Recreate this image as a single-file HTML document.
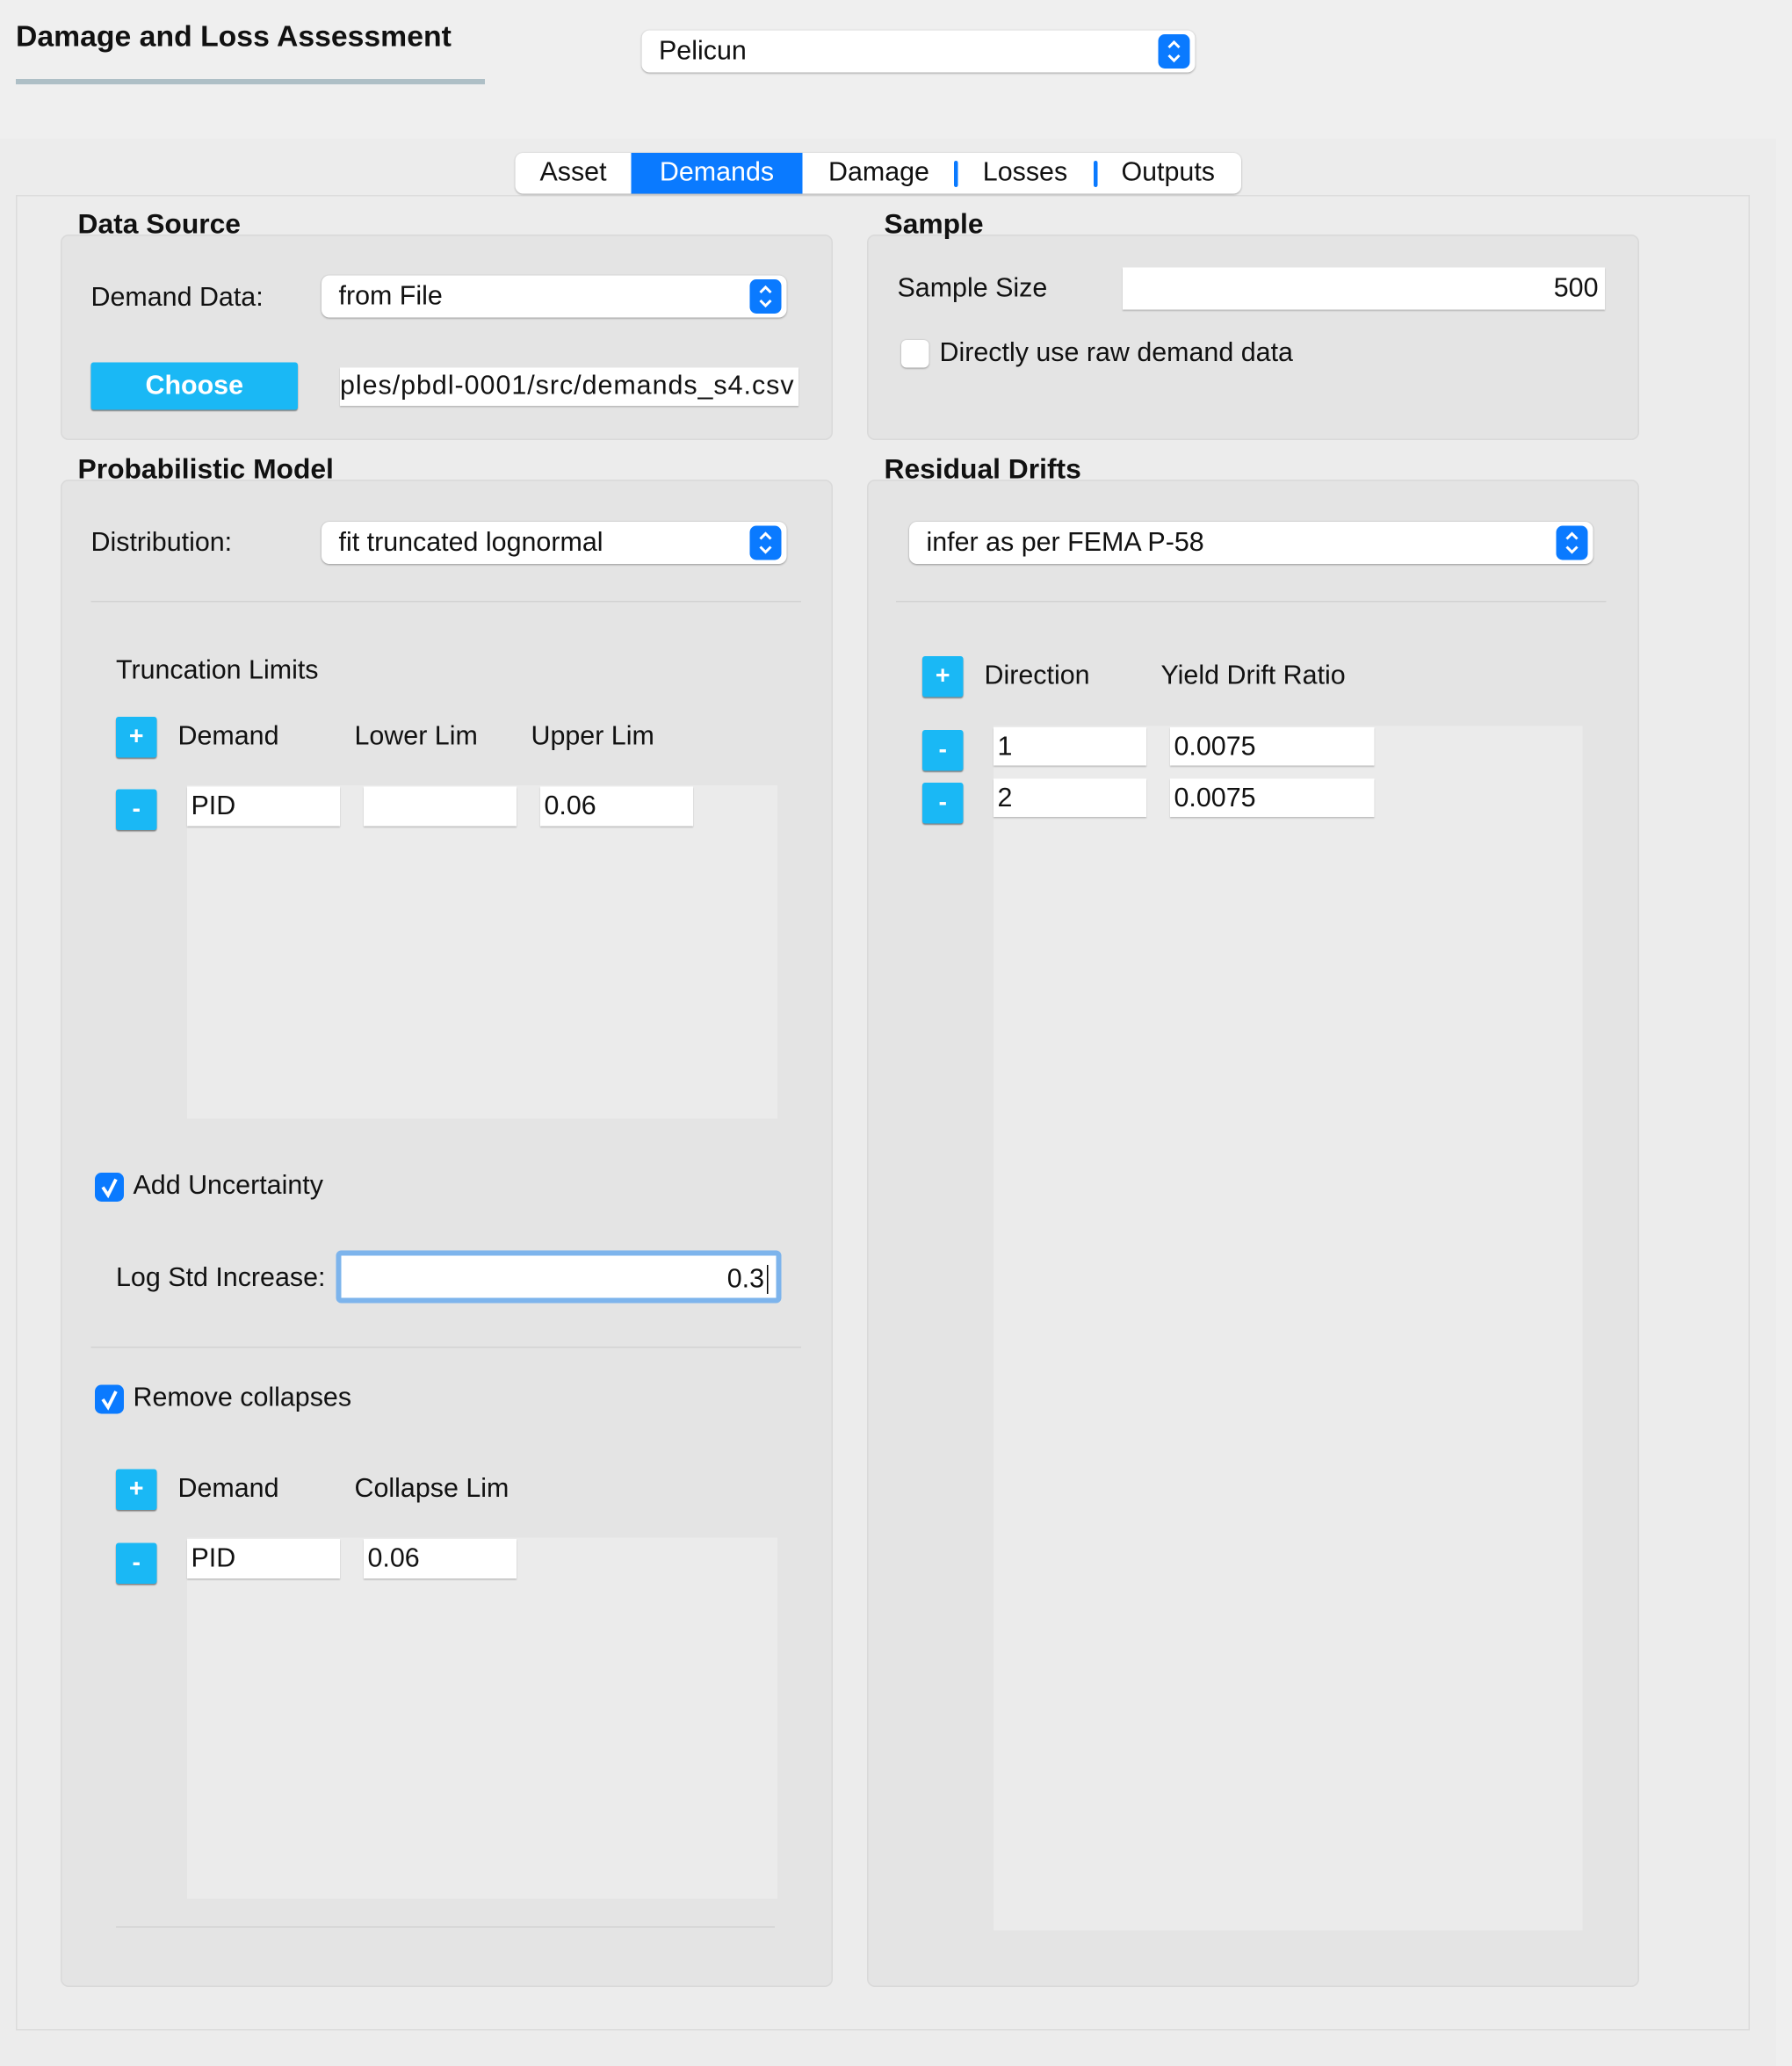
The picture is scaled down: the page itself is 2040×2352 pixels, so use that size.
<!DOCTYPE html>
<html><head><meta charset="utf-8"><style>
html,body{margin:0;padding:0;width:2040px;height:2352px;overflow:hidden;background:#efefef}
#w{position:absolute;left:0;top:0;width:1360px;height:1568px;transform:scale(1.5);transform-origin:0 0;font-family:"Liberation Sans",sans-serif;color:#111;font-size:20.3px}
#w div,#w span{position:absolute;box-sizing:border-box}
.t{white-space:nowrap;line-height:1}
.b{font-weight:bold}
.grp{background:#e4e4e4;border:1px solid #d9d9d9;border-radius:6px}
.gt{font-weight:bold;font-size:21.2px;line-height:1;white-space:nowrap}
.combo{background:#fff;border-radius:6px;box-shadow:0 0.5px 1.5px rgba(0,0,0,.35)}
.arr{background:#0a7aff;border-radius:5px;width:24px;height:26px;top:3px}
.fld{background:#fff;box-shadow:0 1px 1px rgba(0,0,0,.2);font-size:20.3px;line-height:1;padding:5px 3px;white-space:nowrap}
.btn{background:#1ab8f5;border-radius:2px;box-shadow:0 1px 1px rgba(0,0,0,.45);color:#fff;font-weight:bold;text-align:center;width:31px;height:31px;line-height:31px;font-size:19px}
.sep{height:1px;background:#f6f6f6;border-top:1px solid #d2d2d2}
.tab{top:0;height:31px;line-height:31px;text-align:center;font-size:20.3px}
.cb{width:22px;height:22px;border-radius:5px;background:#0a7aff}
.area{background:#ebebeb}
</style></head><body><div id="w">
<div class="t b" style="left:12px;top:17px;font-size:22.5px">Damage and Loss Assessment</div>
<div style="left:12px;top:60px;width:356px;height:4px;background:#aebfc6"></div>
<div class="combo" style="left:487px;top:23px;width:420px;height:32px"><span class="t" style="left:13px;top:6px">Pelicun</span><div class="arr" style="left:392px"><svg width="24" height="26" viewBox="0 0 24 26"><path d="M8 10 L12 6 L16 10 M8 16 L12 20 L16 16" stroke="#fff" stroke-width="2" fill="none"/></svg></div></div>
<div style="left:0;top:105px;width:1348px;height:1463px;background:#ececec"></div>
<div style="left:12px;top:148px;width:1316px;height:1393px;background:#ececec;border:1px solid #dcdcdc"></div>
<div style="left:391px;top:116px;width:551px;height:31px;background:#fff;border-radius:6px;box-shadow:0 0.5px 1.5px rgba(0,0,0,.3)">
<div class="tab" style="left:0;width:88px">Asset</div>
<div class="tab" style="left:88px;width:130px;background:#0a7aff;color:#fff">Demands</div>
<div class="tab" style="left:218px;width:116px">Damage</div>
<div style="left:333px;top:6px;width:3px;height:20px;background:#0a7aff;border-radius:2px"></div>
<div class="tab" style="left:334px;width:106px">Losses</div>
<div style="left:439px;top:6px;width:3px;height:20px;background:#0a7aff;border-radius:2px"></div>
<div class="tab" style="left:440px;width:111px">Outputs</div>
</div>

<!-- Data Source -->
<div class="grp" style="left:46px;top:178px;width:586px;height:156px"></div>
<div class="gt" style="left:59px;top:160px">Data Source</div>
<div class="t" style="left:69px;top:216px">Demand Data:</div>
<div class="combo" style="left:244px;top:209px;width:353px;height:32px"><span class="t" style="left:13px;top:6px">from File</span><div class="arr" style="left:325px"><svg width="24" height="26" viewBox="0 0 24 26"><path d="M8 10 L12 6 L16 10 M8 16 L12 20 L16 16" stroke="#fff" stroke-width="2" fill="none"/></svg></div></div>
<div style="left:69px;top:275px;width:157px;height:36px;background:#1ab8f5;border-radius:2px;box-shadow:0 1px 1px rgba(0,0,0,.45);color:#fff;font-weight:bold;text-align:center;line-height:36px">Choose</div>
<div class="fld" style="left:258px;top:279px;width:348px;height:29px;overflow:hidden;padding:4px 0"><span class="t" style="right:3px;top:4px;letter-spacing:0.65px">ples/pbdl-0001/src/demands_s4.csv</span></div>

<!-- Sample -->
<div class="grp" style="left:658px;top:178px;width:586px;height:156px"></div>
<div class="gt" style="left:671px;top:160px">Sample</div>
<div class="t" style="left:681px;top:209px">Sample Size</div>
<div class="fld" style="left:852px;top:203px;width:366px;height:32px;text-align:right;padding:6px 5px">500</div>
<div style="left:684px;top:258px;width:21px;height:21px;background:#fff;border-radius:4px;box-shadow:0 0.5px 1.5px rgba(0,0,0,.35)"></div>
<div class="t" style="left:713px;top:258px">Directly use raw demand data</div>

<!-- Probabilistic Model -->
<div class="grp" style="left:46px;top:364px;width:586px;height:1144px"></div>
<div class="gt" style="left:59px;top:346px">Probabilistic Model</div>
<div class="t" style="left:69px;top:402px">Distribution:</div>
<div class="combo" style="left:244px;top:396px;width:353px;height:32px"><span class="t" style="left:13px;top:6px">fit truncated lognormal</span><div class="arr" style="left:325px"><svg width="24" height="26" viewBox="0 0 24 26"><path d="M8 10 L12 6 L16 10 M8 16 L12 20 L16 16" stroke="#fff" stroke-width="2" fill="none"/></svg></div></div>
<div class="sep" style="left:69px;top:456px;width:539px"></div>
<div class="t" style="left:88px;top:499px">Truncation Limits</div>
<div class="btn" style="left:88px;top:544px">+</div>
<div class="t" style="left:135px;top:549px">Demand</div>
<div class="t" style="left:269px;top:549px">Lower Lim</div>
<div class="t" style="left:403px;top:549px">Upper Lim</div>
<div class="area" style="left:142px;top:596px;width:448px;height:253px"></div>
<div class="btn" style="left:88px;top:599px">-</div>
<div class="fld" style="left:142px;top:597px;width:116px;height:30px">PID</div>
<div class="fld" style="left:276px;top:597px;width:116px;height:30px"></div>
<div class="fld" style="left:410px;top:597px;width:116px;height:30px">0.06</div>
<div class="cb" style="left:72px;top:890px"><svg width="22" height="22"><path d="M6 11 L10 17 L16 5" stroke="#fff" stroke-width="2.5" fill="none"/></svg></div>
<div class="t" style="left:101px;top:890px">Add Uncertainty</div>
<div class="t" style="left:88px;top:960px">Log Std Increase:</div>
<div style="left:255px;top:949px;width:338px;height:40px;border:4px solid #7db4ec;border-radius:4px;background:#fff"><span class="t" style="right:9px;top:8px">0.3</span><span style="right:6px;top:7px;width:1px;height:22px;background:#000"></span></div>
<div class="sep" style="left:69px;top:1022px;width:539px"></div>
<div class="cb" style="left:72px;top:1051px"><svg width="22" height="22"><path d="M6 11 L10 17 L16 5" stroke="#fff" stroke-width="2.5" fill="none"/></svg></div>
<div class="t" style="left:101px;top:1051px">Remove collapses</div>
<div class="btn" style="left:88px;top:1115px">+</div>
<div class="t" style="left:135px;top:1120px">Demand</div>
<div class="t" style="left:269px;top:1120px">Collapse Lim</div>
<div class="area" style="left:142px;top:1167px;width:448px;height:274px"></div>
<div class="btn" style="left:88px;top:1171px">-</div>
<div class="fld" style="left:142px;top:1168px;width:116px;height:30px">PID</div>
<div class="fld" style="left:276px;top:1168px;width:116px;height:30px">0.06</div>
<div class="sep" style="left:88px;top:1462px;width:500px"></div>

<!-- Residual Drifts -->
<div class="grp" style="left:658px;top:364px;width:586px;height:1144px"></div>
<div class="gt" style="left:671px;top:346px">Residual Drifts</div>
<div class="combo" style="left:690px;top:396px;width:519px;height:32px"><span class="t" style="left:13px;top:6px">infer as per FEMA P-58</span><div class="arr" style="left:491px"><svg width="24" height="26" viewBox="0 0 24 26"><path d="M8 10 L12 6 L16 10 M8 16 L12 20 L16 16" stroke="#fff" stroke-width="2" fill="none"/></svg></div></div>
<div class="sep" style="left:680px;top:456px;width:539px"></div>
<div class="btn" style="left:700px;top:498px">+</div>
<div class="t" style="left:747px;top:503px">Direction</div>
<div class="t" style="left:881px;top:503px">Yield Drift Ratio</div>
<div class="area" style="left:754px;top:551px;width:447px;height:914px"></div>
<div class="btn" style="left:700px;top:554px">-</div>
<div class="btn" style="left:700px;top:594px">-</div>
<div class="fld" style="left:754px;top:552px;width:116px;height:29px">1</div>
<div class="fld" style="left:888px;top:552px;width:155px;height:29px">0.0075</div>
<div class="fld" style="left:754px;top:591px;width:116px;height:29px">2</div>
<div class="fld" style="left:888px;top:591px;width:155px;height:29px">0.0075</div>
</div></body></html>
